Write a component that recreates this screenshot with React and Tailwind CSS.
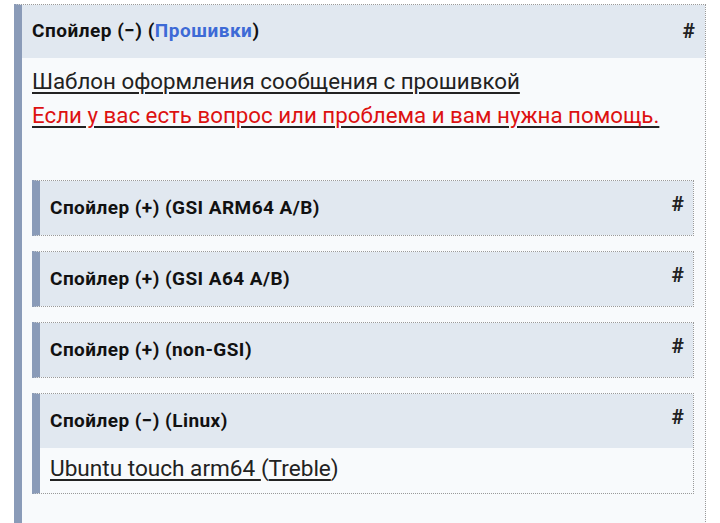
import React from "react";

function Hash({ className = "" }) {
  return (
    <span className={"font-bold text-[21px] leading-none text-[#222] " + className}>#</span>
  );
}

function Nested({ title, children }) {
  return (
    <div className="border border-dotted border-[#9a9a9a] border-l-[8px] border-l-[#8a9bb8] bg-[#f8fafc]" style={{ borderLeftStyle: "solid" }}>
      <div className="flex h-[54px] items-center justify-between bg-[#e1e8f0] pl-[10px] pr-[9px]">
        <span className="text-[19px] font-bold tracking-[0.45px] text-[#111]">{title}</span>
        <Hash className="-mt-[8px]" />
      </div>
      {children}
    </div>
  );
}

export default function App() {
  return (
    <div className="min-h-[523px] bg-white pl-[14px] pr-[14px] pt-[4px]" style={{ fontFamily: "Roboto, 'Noto Sans', sans-serif" }}>
      <div className="h-[540px] border border-dotted border-[#9a9a9a] border-l-[8px] border-l-[#8a9bb8] bg-[#f8fafc]" style={{ borderLeftStyle: "solid" }}>
        <div className="flex h-[53px] items-center justify-between bg-[#e1e8f0] pl-[10px] pr-[10px]">
          <span className="text-[19px] font-bold tracking-[0.5px] text-[#111]">
            Спойлер (−) (<span className="text-[#3d6ad6]">Прошивки</span>)
          </span>
          <Hash />
        </div>
        <div className="pl-[10px] pr-[11px] pt-[6px]">
          <div className="text-[22.3px] leading-[34px] text-[#222] underline decoration-[1.5px] underline-offset-[3px]">
            Шаблон оформления сообщения с прошивкой
          </div>
          <div className="text-[22.3px] leading-[34px] text-[#dd1111] underline decoration-[#222] decoration-[1.5px] underline-offset-[3px]">
            Если у вас есть вопрос или проблема и вам нужна помощь.
          </div>
          <div className="mt-[48px] flex flex-col gap-[15px]">
            <Nested title="Спойлер (+) (GSI ARM64 A/B)" />
            <Nested title="Спойлер (+) (GSI A64 A/B)" />
            <Nested title="Спойлер (+) (non-GSI)" />
            <Nested title="Спойлер (−) (Linux)">
              <div className="px-[10px] pb-[9px] pt-[6px] text-[22.6px] leading-[30px] text-[#222]">
                <span className="underline decoration-[1.5px] underline-offset-[3px]">Ubuntu touch arm64 </span>
                <span>(</span>
                <span className="underline decoration-[1.5px] underline-offset-[3px]">Treble</span>
                <span>)</span>
              </div>
            </Nested>
          </div>
        </div>
      </div>
    </div>
  );
}
